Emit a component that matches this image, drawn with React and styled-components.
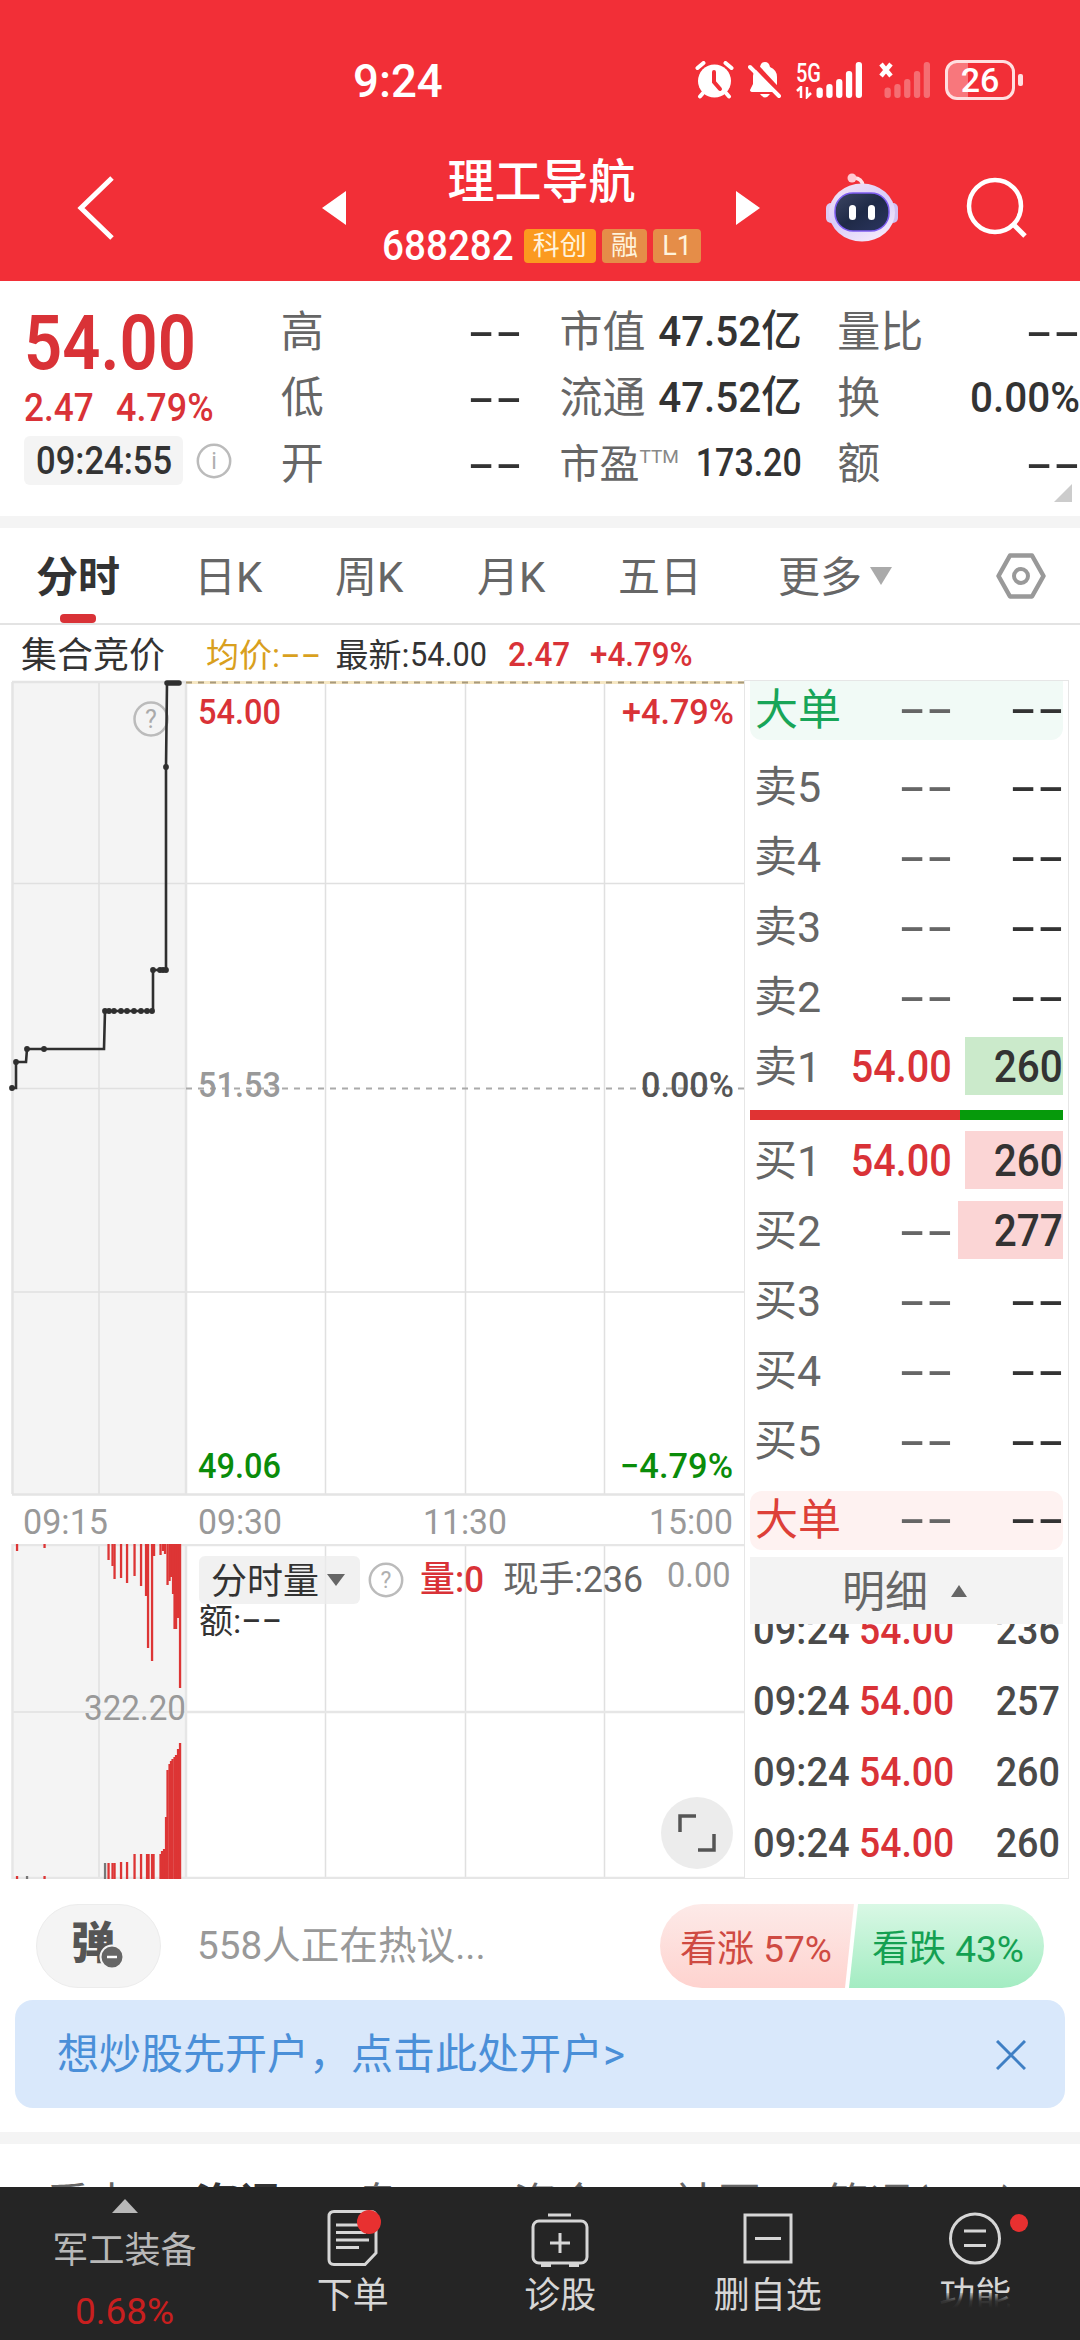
// App.jsx
import React from 'react';
import styled, { createGlobalStyle, css } from 'styled-components';

const GlobalStyle = createGlobalStyle`
  * {
    box-sizing: border-box;
  }

  body {
    margin: 0;
    background: #fff;
    font-family: Roboto, 'Noto Sans CJK SC', sans-serif;
    color: #333;
  }

  svg {
    display: block;
    flex: none;
  }
`;

const RED = '#d93237';
const DARK = '#333';
const GREY = '#666';
const LIGHT = '#999';
const GREEN = '#0a8c0a';

const Screen = styled.div`
  width: 1080px;
  height: 2340px;
  overflow: hidden;
  display: flex;
  flex-direction: column;
`;

/* Text with a fixed slot, squeezed a little to look like a DIN face */
const Num = styled.span`
  display: block;
  flex: none;
  width: ${(p) => (p.$w ? `${p.$w}px` : 'auto')};
  margin-bottom: ${(p) => p.$mb || 0}px;
  font-size: ${(p) => p.$size || 40}px;
  font-weight: ${(p) => p.$weight || 500};
  line-height: 1;
  color: ${(p) => p.$color || DARK};
  white-space: nowrap;
  text-align: ${(p) => (p.$right ? 'right' : 'left')};
  transform: scaleX(${(p) => p.$sx || 0.93});
  transform-origin: ${(p) => (p.$right ? 'right' : 'left')} center;
`;

const Label = styled.span`
  display: block;
  flex: none;
  width: ${(p) => (p.$w ? `${p.$w}px` : 'auto')};
  font-size: ${(p) => p.$size || 43}px;
  font-weight: ${(p) => p.$weight || 400};
  line-height: 1;
  padding-top: 3px;
  color: ${(p) => p.$color || GREY};
  white-space: nowrap;
`;

/* Placeholder for a missing value: two long dashes */
const DashText = styled.span`
  display: block;
  flex: none;
  width: 0.7em;
  margin-left: 0.5em;
  font-family: 'Noto Sans CJK SC', sans-serif;
  font-size: ${(p) => p.$size || 45}px;
  font-weight: 500;
  line-height: 1;
  color: ${(p) => p.$color || DARK};
  white-space: nowrap;
  text-align: right;
  transform: translateY(-0.1em) scaleX(1.72);
  transform-origin: right center;
`;

const Spacer = styled.div`
  flex: none;
  width: ${(p) => p.$w || 0}px;
  height: ${(p) => p.$h || 0}px;
`;

/* ---------- header ---------- */

const Header = styled.header`
  height: 281px;
  flex: none;
  background: #f22f37;
  color: #fff;
`;

const StatusBar = styled.div`
  height: 160px;
  display: flex;
  align-items: center;
  padding-left: 353px;
`;

const NavBar = styled.div`
  height: 96px;
  display: flex;
  align-items: center;
  padding-left: 76px;
`;

const TitleBlock = styled.div`
  width: 319px;
  margin: 0 35px 0 36px;
  display: flex;
  flex-direction: column;
  align-items: center;
`;

const StockName = styled.h1`
  margin: 0 0 16px;
  font-size: 47px;
  font-weight: 500;
  line-height: 60px;
  height: 60px;
`;

const CodeRow = styled.div`
  width: 100%;
  height: 36px;
  display: flex;
  align-items: center;
`;

const Badge = styled.span`
  height: 34px;
  width: ${(p) => p.$w}px;
  margin-left: ${(p) => p.$ml}px;
  border-radius: 4px;
  background: ${(p) => p.$bg};
  color: #fff3dc;
  font-size: 27px;
  line-height: 35px;
  text-align: center;
`;

const AlarmIcon = () => (
  <svg width="40" height="38" viewBox="0 0 40 38">
    <circle cx="19.500" cy="20" r="16.500" fill="#fff" />
    <path d="M2.500 7l6-5M36.500 7l-6-5M8 32l-3 3.500M31 32l3 3.500" stroke="#fff" strokeWidth="4" strokeLinecap="round" />
    <path d="M19 11v10l6 7" stroke="#f22f37" strokeWidth="4" fill="none" strokeLinecap="round" />
  </svg>
);

const MuteIcon = () => (
  <svg width="34" height="38" viewBox="0 0 34 38">
    <path d="M5 31q-3 0-3-2l3-6v-8q0-6 7-9 1-5 5-5t5 5q7 3 7 10v10l3 5z" fill="#fff" />
    <path d="M12 33q5 7 10 0z" fill="#fff" />
    <path d="M5 2l28 30" stroke="#f22f37" strokeWidth="5" />
    <path d="M2 6l29 29" stroke="#fff" strokeWidth="4" strokeLinecap="round" />
  </svg>
);

const SignalWrap = styled.div`
  display: flex;
  align-items: flex-end;
  height: 38px;
  margin-left: ${(p) => p.$ml}px;
`;

const SignalLeft = styled.div`
  width: ${(p) => p.$w}px;
  height: 38px;
  display: flex;
  flex-direction: column;
  justify-content: space-between;
`;

const SignalBars = ({ opacity = 1 }) => (
  <svg width="47" height="38" viewBox="0 0 47 38" opacity={opacity}>
    {[10.500, 14, 19, 27, 36].map((h, i) => (
      <rect key={h} x={i * 9.800 + 0.500} y={37 - h} width="6.300" height={h} rx="3" fill="#fff" />
    ))}
  </svg>
);

const Battery = styled.div`
  position: relative;
  margin-left: 14px;
  width: 70px;
  height: 40px;
  border: 3px solid #ffdfe0;
  border-radius: 12px;
  background: linear-gradient(90deg, #f8777c 0 20px, transparent 20px);
  font-size: 34px;
  font-weight: 500;
  line-height: 35px;
  text-align: center;

  &::after {
    content: '';
    position: absolute;
    right: -11px;
    top: 11px;
    width: 5px;
    height: 12px;
    border-radius: 2px;
    background: #ffdfe0;
  }
`;

const Robot = () => (
  <svg width="74" height="70" viewBox="0 0 74 70">
    <defs>
      <linearGradient id="shell" x1="0" y1="0" x2="0.600" y2="1">
        <stop offset="0" stopColor="#f7e6f2" />
        <stop offset="0.550" stopColor="#d9cdfa" />
        <stop offset="1" stopColor="#f1e6fb" />
      </linearGradient>
      <linearGradient id="visor" x1="0" y1="0" x2="1" y2="1">
        <stop offset="0" stopColor="#3d4663" />
        <stop offset="0.500" stopColor="#1f2a47" />
        <stop offset="1" stopColor="#2b3560" />
      </linearGradient>
    </defs>
    <path d="M27 5q10-1 11 8" stroke="#ffe1e6" strokeWidth="3.500" fill="none" />
    <circle cx="27" cy="5" r="4.500" fill="#ffc9d2" />
    <rect x="1" y="30" width="10" height="20" rx="5" fill="#dccbf3" />
    <rect x="63" y="30" width="10" height="20" rx="5" fill="#cfc0f2" />
    <ellipse cx="37" cy="39.500" rx="33" ry="29" fill="url(#shell)" />
    <rect x="10" y="20" width="54" height="38" rx="18" fill="url(#visor)" stroke="#7d5cf0" strokeWidth="1.500" />
    <rect x="24" y="32" width="7" height="15" rx="3.500" fill="#fff" />
    <rect x="43" y="32" width="7" height="15" rx="3.500" fill="#fff" />
  </svg>
);

/* ---------- quote ---------- */

const Quote = styled.section`
  position: relative;
  height: 235px;
  flex: none;
  display: flex;
  padding-top: 17px;
`;

const PriceCol = styled.div`
  width: 281px;
  padding-left: 24px;
`;

const Line = styled.div`
  display: flex;
  align-items: center;
  height: ${(p) => p.$h}px;
  padding-top: ${(p) => p.$pt || 0}px;
`;

const TimePill = styled.div`
  width: 159px;
  height: 49px;
  display: flex;
  align-items: center;
  padding-left: 12px;
  border-radius: 6px;
  background: #f4f4f4;
  margin-right: 13px;
`;

const StatCol = styled.div`
  width: ${(p) => p.$w}px;
  margin-right: ${(p) => p.$mr || 0}px;
`;

const StatRow = styled.div`
  height: 66px;
  display: flex;
  align-items: center;
  justify-content: space-between;
`;

const Sup = styled.sup`
  display: inline-block;
  font-size: 19px;
  line-height: 1;
  vertical-align: 15px;
  color: #888;
`;

const Corner = styled.div`
  position: absolute;
  right: 8px;
  bottom: 14px;
  border-left: 18px solid transparent;
  border-bottom: 18px solid #ccc;
`;

const Band = styled.div`
  height: 12px;
  flex: none;
  background: #f4f4f4;
`;

const HelpIcon = ({ mark = '?' }) => (
  <svg width="36" height="36" viewBox="0 0 36 36">
    <circle cx="18" cy="18" r="16.200" fill="none" stroke="#bbb" strokeWidth="2.500" />
    <text x="18" y="26" fontSize="23" textAnchor="middle" fill="#b0b0b0">{mark}</text>
  </svg>
);

const stats = [
  { w: 241, mr: 38, rows: [['高', '--'], ['低', '--'], ['开', '--']] },
  { w: 242, mr: 36, rows: [['市值', '47.52亿'], ['流通', '47.52亿'], ['市盈', '173.20']] },
  { w: 243, mr: 0, rows: [['量比', '--'], ['换', '0.00%'], ['额', '--']] },
];

/* ---------- period tabs ---------- */

const Tabs = styled.nav`
  height: 97px;
  flex: none;
  display: flex;
  align-items: center;
  border-bottom: 2px solid #e3e3e3;
  padding-left: 36px;
`;

const Tab = styled.div`
  position: relative;
  height: 95px;
  width: ${(p) => p.$w}px;
  padding-top: 29px;
  font-size: 42px;
  line-height: 41px;
  color: ${GREY};
  ${(p) =>
    p.$active &&
    css`
      color: ${DARK};
      font-weight: 700;

      &::after {
        content: '';
        position: absolute;
        left: 24px;
        bottom: 0;
        width: 36px;
        height: 9px;
        border-radius: 4px;
        background: ${RED};
      }
    `}
`;

const Arrow = styled.i`
  display: inline-block;
  border-left: ${(p) => p.$s}px solid transparent;
  border-right: ${(p) => p.$s}px solid transparent;
  ${(p) => (p.$up ? 'border-bottom' : 'border-top')}: ${(p) => p.$h}px solid ${(p) => p.$color};
`;

/* ---------- chart + order book ---------- */

const InfoRow = styled.div`
  height: 55px;
  flex: none;
  display: flex;
  align-items: center;
  padding: 3px 0 0 21px;
`;

const Board = styled.main`
  height: 1199px;
  flex: none;
  display: flex;
`;

const ChartCol = styled.div`
  position: relative;
  width: 744px;
`;

const Legend = styled.div`
  position: absolute;
  left: 199px;
  top: 876px;
  width: 536px;
`;

const LegendRow = styled.div`
  display: flex;
  align-items: center;
  height: 48px;
`;

const IndicatorPill = styled.div`
  width: 162px;
  height: 48px;
  display: flex;
  align-items: center;
  padding-left: 12px;
  gap: 8px;
  border-radius: 6px;
  background: rgba(236, 236, 236, 0.75);
  margin-right: 8px;
`;

const ExpandButton = styled.div`
  position: absolute;
  left: 661px;
  top: 1117px;
  width: 72px;
  height: 72px;
  border-radius: 50%;
  background: #ececec;
  display: flex;
  align-items: center;
  justify-content: center;
`;

const Book = styled.aside`
  width: 325px;
  border: 1px solid #e6e6e6;
  padding: 0 5px;
  overflow: hidden;
`;

const BigOrder = styled.div`
  height: 59px;
  padding: 0 0 4px 5px;
  display: flex;
  align-items: center;
  border-radius: ${(p) => (p.$buy ? '12px' : '0 0 12px 12px')};
  background: ${(p) => (p.$buy ? '#fef2f1' : '#f1faf6')};
`;

const Level = styled.div`
  height: 70px;
  padding-left: 4px;
  display: flex;
  align-items: center;
`;

const Volume = styled.div`
  width: 111px;
  height: 58px;
  display: flex;
  align-items: center;
  justify-content: flex-end;
  background: linear-gradient(
    ${(p) => p.$bg || 'transparent'},
    ${(p) => p.$bg || 'transparent'}
  ) right / ${(p) => p.$bar || 0}px 100% no-repeat;
`;

const PriceSlot = styled.div`
  width: ${(p) => p.$w}px;
  display: flex;
  justify-content: flex-end;
`;

const Ratio = styled.div`
  height: 10px;
  margin: 9px 0 5px;
  background: linear-gradient(90deg, #e03333 0 210px, #069a0b 210px);
`;

const DetailHead = styled.div`
  height: 67px;
  margin-top: 7px;
  padding-left: 92px;
  display: flex;
  align-items: center;
  gap: 23px;
  background: #f3f3f3;
`;

const Details = styled.div`
  height: 255px;
  overflow: hidden;
  display: flex;
  flex-direction: column;
  justify-content: flex-end;
`;

const DetailRow = styled.div`
  height: 71px;
  flex: none;
  display: flex;
  align-items: center;
  padding-left: 3px;
`;

const sells = [['卖5'], ['卖4'], ['卖3'], ['卖2'], ['卖1', '54.00', '260', 98]];
const buys = [['买1', '54.00', '260', 98], ['买2', '--', '277', 105], ['买3'], ['买4'], ['买5']];
const trades = [['09:24', '54.00', '236'], ['09:24', '54.00', '257'], ['09:24', '54.00', '260'], ['09:24', '54.00', '260']];

const LevelRow = ({ data: [name, price, vol, bar], bg }) => (
  <Level>
    <Label $w={70}>{name}</Label>
    <PriceSlot $w={128}>
      {price && price !== '--' ? (
        <Num $size={45} $right $sx={0.88} $color={RED}>{price}</Num>
      ) : (
        <DashText $color={GREY}>--</DashText>
      )}
    </PriceSlot>
    <Volume $bg={vol && bg} $bar={bar}>
      {vol ? <Num $size={45} $right $sx={0.9}>{vol}</Num> : <DashText>--</DashText>}
    </Volume>
  </Level>
);

// call auction path, x/y relative to the board's top left corner
const auctionPath =
  'M12 408H16V382H26L27 369H104L105 331H153V290H166V87L167 3H181';
const auctionDots = [
  [12, 408], [16, 382], [27, 369], [44, 369], [105, 331], [109, 331], [114, 331], [121, 331],
  [127, 331], [134, 331], [141, 331], [147, 331], [152, 331], [153, 290], [160, 290], [163, 290],
  [166, 290], [166, 87],
];

const topBars = [
  [17, 7], [44.500, 4], [108.500, 16], [112.500, 22], [114.500, 35], [121, 34], [127, 39], [134.500, 32],
  [141, 42], [146, 52], [148, 104], [152, 117], [154, 12], [160.500, 11], [163, 7], [165, 10], [167.500, 41],
  [169.500, 37], [171, 33], [173, 50], [174.500, 85], [176, 85], [178, 74], [180, 144],
];
const bottomBars = [
  [17, 3], [27, 3], [44.500, 3], [105, 16], [108.500, 16], [112.500, 16], [114.500, 16], [121, 17], [127, 17],
  [134.500, 25], [141, 25], [147, 25], [148.500, 25], [152, 25], [153.500, 25], [160.500, 25], [162, 28],
  [164, 30], [166, 62], [167.500, 109], [169.500, 115], [171, 118], [172.500, 120], [174.500, 122],
  [176, 124], [178, 130], [180, 136],
];

const ChartText = ({ len, ...rest }) => (
  <text fontSize="35" textLength={len} lengthAdjust="spacingAndGlyphs" {...rest} />
);

const PriceChart = () => (
  <svg width="744" height="864" viewBox="0 0 744 864">
    <rect x="12" y="2" width="174" height="812" fill="#f4f4f4" />
    <g stroke="#e0e0e0" strokeWidth="1.500">
      <path d="M12 203.500H744M12 612H744M12 408.500H186M99 2V814M325.500 2V814M465.500 2V814M604.500 2V814" />
      <path d="M12 2H186M12.500 2V814M186 2V814M12 814.500H744" strokeWidth="2.500" stroke="#e4e4e4" />
    </g>
    <path d="M186 2.500H744" stroke="#f6e7c3" strokeWidth="3" />
    <path d="M186 2.500H744" stroke="#a89a7c" strokeWidth="2" strokeDasharray="6 6" />
    <path d="M186 408.500H744" stroke="#aaa" strokeWidth="2" strokeDasharray="6 6" />
    <circle cx="151" cy="39" r="16.500" fill="none" stroke="#bbb" strokeWidth="2.500" />
    <text x="151" y="48" fontSize="25" textAnchor="middle" fill="#aaa">?</text>
    <path d={auctionPath} fill="none" stroke="#2f2f2f" strokeWidth="2.600" />
    <path d="M167 3H179" stroke="#2f2f2f" strokeWidth="5.500" strokeLinecap="round" />
    {auctionDots.map(([x, y], i) => (
      <circle key={i} cx={x} cy={y} r="2.900" fill="#2f2f2f" />
    ))}
    <g fontWeight="500">
      <ChartText x="198" y="44" len="83" fill={RED}>54.00</ChartText>
      <ChartText x="622" y="44" len="112" fill={RED}>+4.79%</ChartText>
      <ChartText x="198" y="417" len="83" fill={LIGHT}>51.53</ChartText>
      <ChartText x="641" y="417" len="93" fill="#555">0.00%</ChartText>
      <ChartText x="198" y="798" len="83" fill={GREEN}>49.06</ChartText>
      <ChartText x="620" y="798" len="113" fill={GREEN}>−4.79%</ChartText>
    </g>
    <g fill={LIGHT}>
      <ChartText x="23" y="854" len="85">09:15</ChartText>
      <ChartText x="198" y="854" len="84">09:30</ChartText>
      <ChartText x="423" y="854" len="84">11:30</ChartText>
      <ChartText x="649" y="854" len="84">15:00</ChartText>
    </g>
  </svg>
);

const VolumeChart = () => (
  <svg width="744" height="335" viewBox="0 0 744 335">
    <rect x="12" y="0" width="174" height="335" fill="#f4f4f4" />
    <path d="M12 168H186M99 0V335M325.500 0V335M465.500 0V335M604.500 0V335" stroke="#e0e0e0" strokeWidth="1.500" />
    <path d="M12 1H744M12.500 0V335M186 0V335M12 334H744M186 168H744" stroke="#e6e6e6" strokeWidth="2.500" />
    {topBars.map(([x, h]) => (
      <rect key={x} x={x - 1.100} y="0" width="2.300" height={h} fill="#dd3535" />
    ))}
    {bottomBars.map(([x, h]) => (
      <rect key={x} x={x - 1.100} y={335 - h} width="2.300" height={h} fill={x === 105 || x === 27 ? '#777' : '#dd3535'} />
    ))}
    <ChartText x="84" y="176" len="102" fill={LIGHT}>322.20</ChartText>
  </svg>
);

/* ---------- discussion + banner ---------- */

const Discuss = styled.section`
  height: 121px;
  flex: none;
  display: flex;
  align-items: center;
  padding: 13px 36px 0 36px;
`;

const DanmuButton = styled.div`
  position: relative;
  width: 125px;
  height: 84px;
  margin-right: 36px;
  padding: 17px 0 0 34px;
  border: 1px solid #ececec;
  border-radius: 42px;
  background: #f4f4f4;
  font-size: 44px;
  font-weight: 900;
  line-height: 44px;
  color: #555;

  svg {
    position: absolute;
    left: 62px;
    top: 39px;
  }
`;

const Votes = styled.div`
  display: flex;
  margin-left: auto;
  width: 384px;
  height: 84px;
`;

const Vote = styled.div`
  display: flex;
  align-items: center;
  height: 84px;
  font-size: 37px;
  white-space: nowrap;
  ${(p) =>
    p.$up
      ? css`
          width: 194px;
          padding-left: 20px;
          color: #cf4a42;
          background: linear-gradient(#fdeae8, #fed3cf);
          border-radius: 42px 0 0 42px;
          clip-path: polygon(0 0, 100% 0, calc(100% - 9px) 100%, 0 100%);
        `
      : css`
          width: 195px;
          margin-left: -5px;
          padding-left: 23px;
          color: #14a052;
          background: linear-gradient(#d9f8e5, #a3ecc2);
          border-radius: 0 42px 42px 0;
          clip-path: polygon(9px 0, 100% 0, 100% 100%, 0 100%);
        `}
`;

const Banner = styled.div`
  height: 108px;
  flex: none;
  margin: 0 15px 24px;
  padding: 1px 39px 0 42px;
  display: flex;
  align-items: center;
  justify-content: space-between;
  border-radius: 18px;
  background: #d9e8fb;
  color: #4a8fd8;
  font-size: 42px;
  line-height: 1;
`;

const NewsTabs = styled.div`
  height: 43px;
  flex: none;
  padding: 35px 0 0 46px;
  display: flex;
  overflow: hidden;
  font-size: 44px;
  line-height: 52px;
  white-space: nowrap;
`;

const NewsTab = styled.span`
  flex: none;
  width: ${(p) => p.$w}px;
  color: ${(p) => (p.$active ? DARK : GREY)};
  font-weight: ${(p) => (p.$active ? 700 : 400)};
`;

/* ---------- bottom bar ---------- */

const BottomBar = styled.footer`
  height: 153px;
  flex: none;
  display: grid;
  grid-template-columns: 249px repeat(4, 207.5px);
  background: #252525;
  color: #d6d6d6;
  font-size: 36px;
  line-height: 1;
`;

const Sector = styled.div`
  display: flex;
  flex-direction: column;
  align-items: center;
  padding-top: 12px;
  color: #b8b8b8;
`;

const SectorName = styled.span`
  margin-top: 20px;
  height: 60px;
`;

const SectorChange = styled.span`
  font-size: 37px;
  color: #c91f1f;
`;

const Action = styled.div`
  position: relative;
  display: flex;
  flex-direction: column;
  align-items: center;
  padding-top: 20px;

  svg {
    height: 60px;
    margin-bottom: 11px;
  }
`;

const Dot = styled.i`
  position: absolute;
  left: ${(p) => p.$x}px;
  top: ${(p) => p.$y}px;
  width: ${(p) => p.$d}px;
  height: ${(p) => p.$d}px;
  border-radius: 50%;
  background: #e83030;
`;

const Smudge = styled.div`
  position: absolute;
  left: 20px;
  top: 106px;
  width: 160px;
  height: 47px;
  background: linear-gradient(rgba(37, 37, 37, 0.2), rgba(37, 37, 37, 0.9) 8px, #252525 15px);
`;

const iconProps = { fill: 'none', stroke: '#d6d6d6', strokeWidth: 3 };

function App() {
  return (
    <>
      <GlobalStyle />
      <Screen>
        <Header>
          <StatusBar>
            <Num $size={47} $w={342} $sx={0.97} $color="#fff">9:24</Num>
            <AlarmIcon />
            <Spacer $w={13} />
            <MuteIcon />
            <SignalWrap $ml={14}>
              <SignalLeft $w={20}>
                <Num $size={25} $w={24} $sx={0.8} $color="#fff">5G</Num>
                <svg width="16" height="13" viewBox="0 0 16 13">
                  <path d="M1 5L5 1V12M15 7l-4 4V1" fill="none" stroke="#fff" strokeWidth="2.500" />
                </svg>
              </SignalLeft>
              <SignalBars />
            </SignalWrap>
            <SignalWrap $ml={14}>
              <SignalLeft $w={7}>
                <svg width="18" height="18" viewBox="0 0 18 18">
                  <path d="M4 3l10 12M14 3L4 15" stroke="#fff" strokeWidth="4.500" />
                </svg>
              </SignalLeft>
              <SignalBars opacity={0.3} />
            </SignalWrap>
            <Battery>26</Battery>
          </StatusBar>
          <NavBar>
            <svg width="40" height="66" viewBox="0 0 40 66">
              <path d="M36 3L5 33l31 30" fill="none" stroke="#fff" strokeWidth="5" />
            </svg>
            <Spacer $w={206} />
            <svg width="24" height="34" viewBox="0 0 24 34">
              <path d="M24 0v34L0 17z" fill="#fff" />
            </svg>
            <TitleBlock>
              <StockName>理工导航</StockName>
              <CodeRow>
                <Num $size={42} $w={131} $sx={0.92} $color="#fff">688282</Num>
                <Badge $w={72} $ml={11} $bg="#fb9a1f">科创</Badge>
                <Badge $w={46} $ml={6} $bg="#e58d48">融</Badge>
                <Badge $w={48} $ml={6} $bg="#e58d48">L1</Badge>
              </CodeRow>
            </TitleBlock>
            <svg width="24" height="34" viewBox="0 0 24 34">
              <path d="M0 0v34l24-17z" fill="#fff" />
            </svg>
            <Spacer $w={65} />
            <Robot />
            <Spacer $w={67} />
            <svg width="62" height="62" viewBox="0 0 62 62">
              <circle cx="29" cy="29" r="26" fill="none" stroke="#fff" strokeWidth="4.500" />
              <path d="M48 48l11 11" stroke="#fff" strokeWidth="5" />
            </svg>
          </NavBar>
        </Header>

        <Quote>
          <PriceCol>
            <Line $h={90}>
              <Num $size={76} $weight={600} $sx={0.88} $color={RED}>54.00</Num>
            </Line>
            <Line $h={40}>
              <Num $size={39} $w={92} $sx={0.9} $color={RED}>2.47</Num>
              <Num $size={39} $sx={0.92} $color={RED}>4.79%</Num>
            </Line>
            <Line $h={64} $pt={1}>
              <TimePill>
                <Num $size={38} $sx={0.91}>09:24:55</Num>
              </TimePill>
              <HelpIcon mark="i" />
            </Line>
          </PriceCol>
          {stats.map((col) => (
            <StatCol key={col.w} $w={col.w} $mr={col.mr}>
              {col.rows.map(([name, value]) => (
                <StatRow key={name}>
                  <Label $size={name === '市盈' ? 40 : 43}>
                    {name}
                    {name === '市盈' && <Sup>TTM</Sup>}
                  </Label>
                  {value === '--' ? (
                    <DashText>--</DashText>
                  ) : (
                    <Num $size={value === '173.20' ? 39 : 43} $right $sx={value === '173.20' ? 0.87 : 0.94}>
                      {value}
                    </Num>
                  )}
                </StatRow>
              ))}
            </StatCol>
          ))}
          <Corner />
        </Quote>
        <Band />

        <Tabs>
          <Tab $w={158} $active>分时</Tab>
          <Tab $w={141}>日K</Tab>
          <Tab $w={142}>周K</Tab>
          <Tab $w={141}>月K</Tab>
          <Tab $w={160}>五日</Tab>
          <Tab $w={92}>更多</Tab>
          <Arrow $s={11} $h={18} $color="#aaa" />
          <Spacer $w={103} />
          <svg width="52" height="50" viewBox="0 0 52 50">
            <path d="M15 4.500H37L48.500 25 37 45.500H15L3.500 25z" fill="none" stroke="#999" strokeWidth="4.500" strokeLinejoin="round" />
            <circle cx="26" cy="25" r="7" fill="none" stroke="#999" strokeWidth="4" />
          </svg>
        </Tabs>

        <InfoRow>
          <Label $size={36} $w={185} $color={DARK}>集合竞价</Label>
          <Label $size={33} $color="#d9a01e">均价:</Label>
          <DashText $size={33} $color="#d9a01e">--</DashText>
          <Spacer $w={16} />
          <Label $size={33} $color={DARK}>最新:</Label>
          <Num $size={33} $w={98} $sx={0.93} $weight={400}>54.00</Num>
          <Num $size={33} $w={82} $sx={0.95} $color={RED}>2.47</Num>
          <Num $size={33} $sx={0.95} $color={RED}>+4.79%</Num>
        </InfoRow>

        <Board>
          <ChartCol>
            <PriceChart />
            <VolumeChart />
            <Legend>
              <LegendRow>
                <IndicatorPill>
                  <Label $size={36} $color={DARK}>分时量</Label>
                  <Arrow $s={9} $h={12} $color={GREY} />
                </IndicatorPill>
                <HelpIcon />
                <Spacer $w={16} />
                <Num $size={36} $w={83} $sx={0.97} $color={RED}>量:0</Num>
                <Num $size={36} $w={164} $sx={0.99} $weight={400} $color={GREY}>现手:236</Num>
                <Num $size={35} $mb={9} $sx={0.93} $weight={400} $color={LIGHT}>0.00</Num>
              </LegendRow>
              <Line $h={30}>
                <Label $size={34} $color={DARK}>额:</Label>
                <DashText $size={33}>--</DashText>
              </Line>
            </Legend>
            <ExpandButton>
              <svg width="38" height="38" viewBox="0 0 38 38">
                <path d="M2 18V2h16M36 20v16H20" fill="none" stroke="#555" strokeWidth="3.500" />
              </svg>
            </ExpandButton>
          </ChartCol>
          <Book>
            <BigOrder>
              <Label $w={69} $color="#18a558">大单</Label>
              <PriceSlot $w={128}><DashText $color={GREY}>--</DashText></PriceSlot>
              <Volume><DashText>--</DashText></Volume>
            </BigOrder>
            <Spacer $h={11} />
            {sells.map((row) => <LevelRow key={row[0]} data={row} bg="#cbeacb" />)}
            <Ratio />
            {buys.map((row) => <LevelRow key={row[0]} data={row} bg="#fbd5d5" />)}
            <Spacer $h={16} />
            <BigOrder $buy>
              <Label $w={69} $color="#dd4038">大单</Label>
              <PriceSlot $w={128}><DashText $color={GREY}>--</DashText></PriceSlot>
              <Volume><DashText>--</DashText></Volume>
            </BigOrder>
            <DetailHead>
              <Label>明细</Label>
              <Arrow $up $s={8} $h={12} $color={GREY} />
            </DetailHead>
            <Details>
              {trades.map(([time, price, vol], i) => (
                <DetailRow key={i}>
                  <Num $size={41} $w={106} $sx={0.93} $color="#4a4a4a">{time}</Num>
                  <Num $size={41} $w={94} $sx={0.91} $color={RED}>{price}</Num>
                  <Num $size={41} $w={107} $sx={0.92} $color="#4a4a4a" $right>{vol}</Num>
                </DetailRow>
              ))}
            </Details>
          </Book>
        </Board>

        <Discuss>
          <DanmuButton>
            弹
            <svg width="26" height="26" viewBox="0 0 26 26">
              <circle cx="13" cy="13" r="11.500" fill="#666" stroke="#f4f4f4" strokeWidth="2" />
              <path d="M8 13h10" stroke="#fff" strokeWidth="2.500" />
            </svg>
          </DanmuButton>
          <Num $size={39} $sx={0.99} $weight={400} $color={LIGHT}>558人正在热议...</Num>
          <Votes>
            <Vote $up>看涨 57%</Vote>
            <Vote>看跌 43%</Vote>
          </Votes>
        </Discuss>

        <Banner>
          <span>想炒股先开户，点击此处开户&gt;</span>
          <svg width="30" height="30" viewBox="0 0 30 30">
            <path d="M1 1l28 28M29 1L1 29" stroke="#3f7fc4" strokeWidth="3" />
          </svg>
        </Banner>
        <Band />

        <NewsTabs>
          <NewsTab $w={149}>看点</NewsTab>
          <NewsTab $w={160} $active>资讯</NewsTab>
          <NewsTab $w={158}>盘口</NewsTab>
          <NewsTab $w={160}>资金</NewsTab>
          <NewsTab $w={152}>社区</NewsTab>
          <NewsTab>简况(F10)</NewsTab>
        </NewsTabs>

        <BottomBar>
          <Sector>
            <Arrow $up $s={13} $h={14} $color="#b8b8b8" />
            <SectorName>军工装备</SectorName>
            <SectorChange>0.68%</SectorChange>
          </Sector>
          <Action>
            <svg width="54" viewBox="0 0 54 60" {...iconProps}>
              <path d="M8 4.500H45q5 0 5 5V46L39 57.500H8q-5 0-5-5V9.500q0-5 5-5z" />
              <path d="M10 18H34M10 25.500H40M10 33H43M10 40.500H33" />
            </svg>
            <Dot $x={108} $y={23} $d={24} />
            下单
          </Action>
          <Action>
            <svg width="60" viewBox="0 0 60 60" {...iconProps}>
              <path d="M18 8H41" />
              <rect x="3" y="14" width="54" height="42" rx="6" />
              <path d="M30 26v20M20 36h20" />
              <path d="M11 58h10M39 58h10" strokeWidth="4" />
            </svg>
            诊股
          </Action>
          <Action>
            <svg width="54" viewBox="0 0 54 60" {...iconProps}>
              <rect x="4" y="8" width="46" height="47" />
              <path d="M14 31.500h26" />
            </svg>
            删自选
          </Action>
          <Action>
            <svg width="54" viewBox="0 0 54 60" {...iconProps}>
              <circle cx="27" cy="31.500" r="24.500" />
              <path d="M16 24h22M16 38.500h22" />
            </svg>
            <Dot $x={138} $y={27} $d={18} />
            功能
            <Smudge />
          </Action>
        </BottomBar>
      </Screen>
    </>
  );
}

export default App;
